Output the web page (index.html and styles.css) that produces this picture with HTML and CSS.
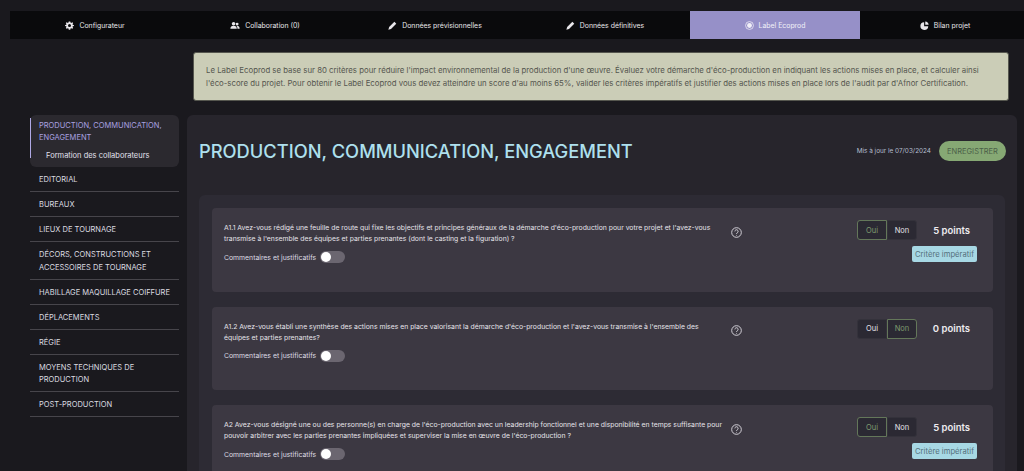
FILE: index.html
```html
<!DOCTYPE html>
<html lang="fr">
<head>
<meta charset="utf-8">
<title>Label Ecoprod</title>
<link rel="stylesheet" href="styles.css">
</head>
<body>
<nav class="tabs">
  <a class="tab"><svg class="ico" viewBox="0 0 24 24"><path fill-rule="evenodd" d="M10 1h4l.7 3.200 1.900.8 2.800-1.800 2.400 2.400-1.800 2.800.8 1.900L24 11v2l-3.200.7-.8 1.900 1.800 2.800-2.400 2.400-2.800-1.800-1.900.8L14 23h-4l-.7-3.200-1.900-.8-2.800 1.800-2.400-2.400L4 15.600l-.8-1.900L0 13v-2l3.200-.7.8-1.900-1.800-2.800 2.400-2.400L7.400 5l1.900-.8zM12 8a4 4 0 1 0 0 8 4 4 0 0 0 0-8z"/></svg>Configurateur</a>
  <a class="tab"><svg class="ico ico-wide" viewBox="0 0 28 24"><circle cx="10" cy="7" r="5"/><path d="M1 21c0-5 3-8 9-8s9 3 9 8z"/><circle cx="20" cy="8" r="4"/><path d="M20 13c4 0 7 2 7 8h-6c0-3-1-6-3-8z"/></svg>Collaboration (0)</a>
  <a class="tab"><svg class="ico" viewBox="0 0 24 24"><path d="M17 2l5 5L8 21l-7 2 2-7z"/></svg>Données prévisionnelles</a>
  <a class="tab"><svg class="ico" viewBox="0 0 24 24"><path d="M17 2l5 5L8 21l-7 2 2-7z"/></svg>Données définitives</a>
  <a class="tab tab-active"><svg class="ico" viewBox="0 0 24 24"><circle cx="12" cy="12" r="6.500"/><circle cx="12" cy="12" r="10.500" fill="none" stroke="currentColor" stroke-width="2"/></svg>Label Ecoprod</a>
  <a class="tab"><svg class="ico" viewBox="0 0 24 24"><path d="M11 3v11h11a10.500 10.500 0 1 1-11-11z"/><path d="M14 1a10 10 0 0 1 9 9h-9z"/></svg>Bilan projet</a>
</nav>

<section class="notice">Le Label Ecoprod se base sur 80 critères pour réduire l'impact environnemental de la production d'une œuvre. Évaluez votre démarche d'éco-production en indiquant les actions mises en place, et calculer ainsi l'éco-score du projet. Pour obtenir le Label Ecoprod vous devez atteindre un score d'au moins 65%, valider les critères impératifs et justifier des actions mises en place lors de l'audit par d'Afnor Certification.</section>

<div class="layout">
  <aside class="side">
    <div class="side-current">
      <div class="side-current-title">PRODUCTION, COMMUNICATION, ENGAGEMENT</div>
      <div class="side-sub">Formation des collaborateurs</div>
    </div>
    <div class="side-item">EDITORIAL</div>
    <div class="side-item">BUREAUX</div>
    <div class="side-item">LIEUX DE TOURNAGE</div>
    <div class="side-item">DÉCORS, CONSTRUCTIONS ET ACCESSOIRES DE TOURNAGE</div>
    <div class="side-item">HABILLAGE MAQUILLAGE COIFFURE</div>
    <div class="side-item">DÉPLACEMENTS</div>
    <div class="side-item">RÉGIE</div>
    <div class="side-item">MOYENS TECHNIQUES DE PRODUCTION</div>
    <div class="side-item">POST-PRODUCTION</div>
  </aside>

  <main class="panel">
    <header class="panel-head">
      <h1 class="title">PRODUCTION, COMMUNICATION, ENGAGEMENT</h1>
      <div class="save">
        <span class="updated">Mis à jour le 07/03/2024</span>
        <button class="btn-save">ENREGISTRER</button>
      </div>
    </header>
    <div class="group">
      <article class="q">
        <div class="q-body">
          <p class="q-text">A1.1 Avez-vous rédigé une feuille de route qui fixe les objectifs et principes généraux de la démarche d'éco-production pour votre projet et l'avez-vous transmise à l'ensemble des équipes et parties prenantes (dont le casting et la figuration) ?</p>
          <div class="q-comment">Commentaires et justificatifs<span class="switch"></span></div>
        </div>
        <svg class="help" viewBox="0 0 24 24"><circle cx="12" cy="12" r="10.500"/><path d="M8.500 9.500a3.500 3.500 0 1 1 5.500 2.900c-1.300.9-2 1.500-2 3"/><circle class="help-dot" cx="12" cy="18.500" r="1"/></svg>
        <div class="q-side">
          <div class="q-row">
            <div class="choice"><span class="opt opt-on">Oui</span><span class="opt">Non</span></div>
            <span class="points">5 points</span>
          </div>
          <span class="badge">Critère impératif</span>
        </div>
      </article>
      <article class="q">
        <div class="q-body">
          <p class="q-text">A1.2 Avez-vous établi une synthèse des actions mises en place valorisant la démarche d'éco-production et l'avez-vous transmise à l'ensemble des équipes et parties prenantes?</p>
          <div class="q-comment">Commentaires et justificatifs<span class="switch"></span></div>
        </div>
        <svg class="help" viewBox="0 0 24 24"><circle cx="12" cy="12" r="10.500"/><path d="M8.500 9.500a3.500 3.500 0 1 1 5.500 2.900c-1.300.9-2 1.500-2 3"/><circle class="help-dot" cx="12" cy="18.500" r="1"/></svg>
        <div class="q-side">
          <div class="q-row">
            <div class="choice"><span class="opt">Oui</span><span class="opt opt-on">Non</span></div>
            <span class="points">0 points</span>
          </div>
        </div>
      </article>
      <article class="q">
        <div class="q-body">
          <p class="q-text">A2 Avez-vous désigné une ou des personne(s) en charge de l'éco-production avec un leadership fonctionnel et une disponibilité en temps suffisante pour pouvoir arbitrer avec les parties prenantes impliquées et superviser la mise en œuvre de l'éco-production ?</p>
          <div class="q-comment">Commentaires et justificatifs<span class="switch"></span></div>
        </div>
        <svg class="help" viewBox="0 0 24 24"><circle cx="12" cy="12" r="10.500"/><path d="M8.500 9.500a3.500 3.500 0 1 1 5.500 2.900c-1.300.9-2 1.500-2 3"/><circle class="help-dot" cx="12" cy="18.500" r="1"/></svg>
        <div class="q-side">
          <div class="q-row">
            <div class="choice"><span class="opt opt-on">Oui</span><span class="opt">Non</span></div>
            <span class="points">5 points</span>
          </div>
          <span class="badge">Critère impératif</span>
        </div>
      </article>
    </div>
  </main>
</div>
</body>
</html>
```
FILE: styles.css
```css
* { box-sizing: border-box; }
html { height: 471px; overflow: hidden; }
body {
  margin: 0;
  height: 471px;
  overflow: hidden;
  background: #1a191e;
  color: #e6e4ea;
  font-family: "Inter", "Noto Sans", sans-serif;
  padding: 11px 0 0 10px;
}
.tabs {
  display: grid;
  grid-template-columns: repeat(6, 170px);
  height: 28px;
  width: 1014px;
  overflow: hidden;
  background: #0a0a0c;
}
.tab {
  display: flex;
  align-items: center;
  justify-content: center;
  gap: 5px;
  font-size: 6.900px;
  color: #e8e6ea;
}
.tab-active { background: #9690c8; color: #f1f0f8; }
.ico { width: 9px; height: 9px; fill: currentColor; flex: none; }
.ico-wide { width: 10px; }

.notice {
  width: 816px;
  height: 49px;
  margin: 13px 0 14px 183px;
  padding: 11px 12px;
  background: #cbcdb7;
  border: 1px solid #55564e;
  border-radius: 3px;
  color: #55564f;
  font-size: 7.800px;
  line-height: 13px;
}

.layout { display: flex; align-items: flex-start; height: 356px; overflow: hidden; }
.side { width: 149px; margin-left: 20px; flex: none; font-size: 7.500px; line-height: 12.500px; }
.side-current {
  position: relative;
  height: 52px;
  padding: 4.500px 8px 0 9px;
  background: #2b292f;
  border-radius: 6px;
  color: #a9a1e0;
  line-height: 12px;
}
.side-current::before {
  content: "";
  position: absolute;
  left: 0;
  top: 3px;
  height: 40px;
  width: 1px;
  background: #b0a9e6;
}
.side-sub { padding-left: 7px; margin-top: 6px; color: #e2e0ee; white-space: nowrap; }
.side-item {
  padding: 7px 4px 4.500px 9px;
  border-bottom: 1px solid #47454b;
  color: #dcdce0;
}

.panel {
  margin-left: 8px;
  width: 830px;
  height: 356px;
  overflow: hidden;
  padding: 0 11px 0 12px;
  background: #27252c;
  border-radius: 6px 6px 0 0;
  flex: none;
}
.panel-head {
  display: flex;
  align-items: center;
  justify-content: space-between;
  height: 80px;
  padding-bottom: 8px;
}
.title {
  margin: 0;
  font-size: 18.300px;
  font-weight: 500;
  color: #aee0ee;
  white-space: nowrap;
}
.save { display: flex; align-items: center; gap: 8px; }
.updated { font-size: 6.400px; color: #b6bfd0; }
.btn-save {
  width: 67px;
  height: 20px;
  padding: 0;
  border: 0;
  border-radius: 10px;
  background: #86a874;
  color: #4b5f48;
  font: inherit;
  font-size: 7.500px;
}
.group {
  padding: 13px 12px 13px 13px;
  background: #2d2b34;
  border-radius: 6px 6px 0 0;
  display: flex;
  flex-direction: column;
  gap: 15px;
  width: 806px;
}
.q {
  display: flex;
  align-items: flex-start;
  background: #3c3842;
  border-radius: 4px;
  height: 83.500px;
  padding: 12px 16px 0 12px;
  flex: none;
}
.q-body { width: 500px; flex: none; padding-top: 2px; }
.q-text { margin: 0; font-size: 6.850px; line-height: 11px; color: #e6e4ea; }
.q-comment { display: flex; align-items: center; gap: 4px; margin-top: 7px; font-size: 6.850px; color: #dfdde4; }
.switch {
  position: relative;
  width: 25px;
  height: 12px;
  border-radius: 6px;
  background: #6b6670;
}
.switch::before {
  content: "";
  position: absolute;
  left: 1px;
  top: 1px;
  width: 10px;
  height: 10px;
  border-radius: 50%;
  background: #fff;
}
.help { width: 11px; height: 11px; margin: 6.500px 0 0 7px; fill: none; stroke: #dedce2; stroke-width: 2; flex: none; }
.help-dot { fill: #dedce2; stroke: none; }
.q-side { margin-left: auto; width: 120px; display: flex; flex-direction: column; align-items: flex-end; }
.q-row { display: flex; align-items: center; width: 120px; }
.choice { display: flex; height: 20px; }
.opt {
  width: 30px;
  display: flex;
  align-items: center;
  justify-content: center;
  background: #2b2933;
  border: 1px solid #34323b;
  font-size: 7.500px;
  color: #e4e2e8;
}
.opt:first-child { border-radius: 3px 0 0 3px; }
.opt:last-child { border-radius: 0 3px 3px 0; }
.opt-on { border-color: #64775a; color: #7f9b6f; }
.points { margin-left: auto; margin-right: 7px; font-size: 9.500px; font-weight: 600; color: #eeecef; white-space: nowrap; }
.badge {
  margin-top: 6px;
  width: 65px;
  height: 16px;
  border-radius: 2px;
  background: #a7d8e4;
  color: #55707c;
  font-size: 7.700px;
  display: flex;
  align-items: center;
  justify-content: center;
  white-space: nowrap;
}
```
